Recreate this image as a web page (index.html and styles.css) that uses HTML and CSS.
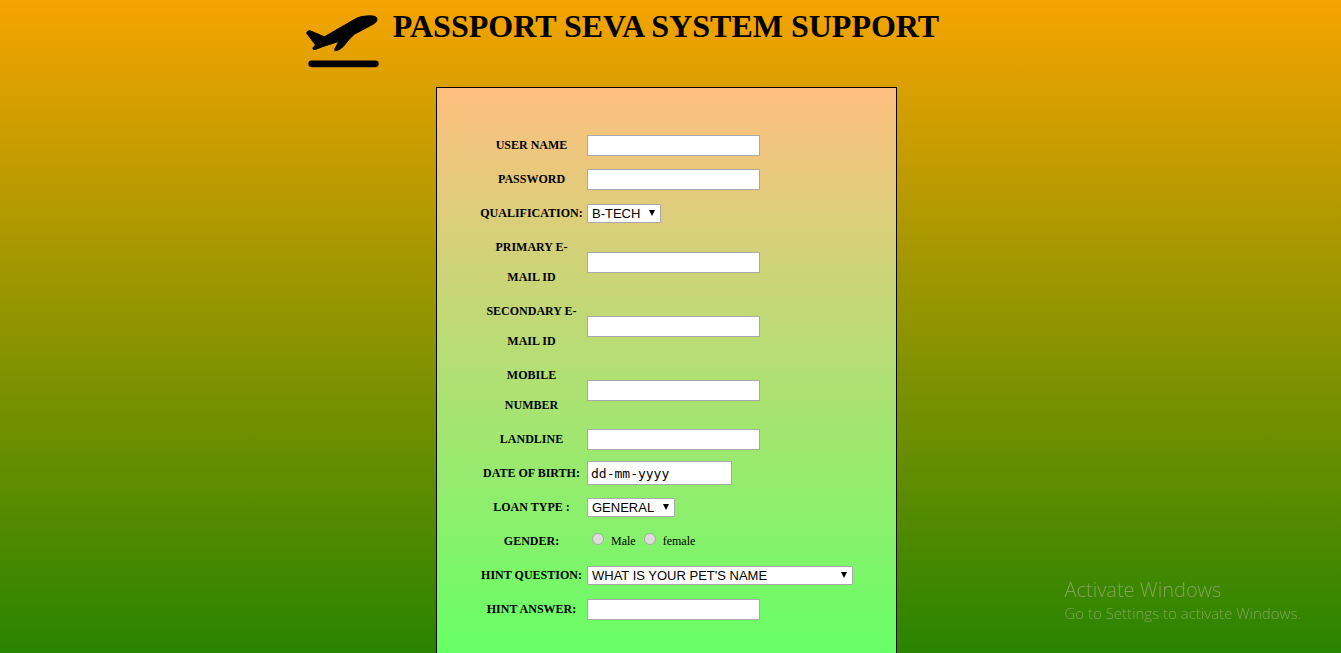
FILE: index.html
```html
<!DOCTYPE html>
<html lang="en">
<head>
<meta charset="utf-8">
<title>Passport Seva System Support</title>
<link rel="stylesheet" href="styles.css">
</head>
<body>
<header class="banner">
  <svg class="logo" viewBox="47 44 219 158" aria-hidden="true">
    <path stroke="#000" stroke-width="3" stroke-linejoin="round" d="M49 98C50 92 56 89 62 92L102 109L199 53C216 46 236 45 250 47C259 48 261 54 259 61C256 68 249 71 241 75L192 101C182 110 171 122 164 132C157 141 149 147 139 150C133 152 131 149 134 145L145 123L104 136L74 147C68 148 66 144 69 140L76 134Z"/>
    <rect x="54" y="180" width="211" height="20" rx="10"/>
  </svg>
  <h1 class="title">PASSPORT SEVA SYSTEM SUPPORT</h1>
</header>
<main class="content">
  <form class="panel">
    <label class="label" for="user">USER NAME</label>
    <div class="cell"><input class="field" id="user" type="text"></div>
    <label class="label" for="pass">PASSWORD</label>
    <div class="cell"><input class="field" id="pass" type="password"></div>
    <label class="label" for="qual">QUALIFICATION:</label>
    <div class="cell"><span class="picker"><select class="select" id="qual"><option>B-TECH</option></select></span></div>
    <label class="label" for="mail1">PRIMARY E-MAIL ID</label>
    <div class="cell"><input class="field" id="mail1" type="text"></div>
    <label class="label" for="mail2">SECONDARY E-MAIL ID</label>
    <div class="cell"><input class="field" id="mail2" type="text"></div>
    <label class="label" for="mobile">MOBILE<br>NUMBER</label>
    <div class="cell"><input class="field" id="mobile" type="text"></div>
    <label class="label" for="land">LANDLINE</label>
    <div class="cell"><input class="field" id="land" type="text"></div>
    <label class="label" for="dob">DATE OF BIRTH:</label>
    <div class="cell"><input class="field date" id="dob" type="text" placeholder="dd-mm-yyyy"></div>
    <label class="label" for="loan">LOAN TYPE :</label>
    <div class="cell"><span class="picker"><select class="select" id="loan"><option>GENERAL</option></select></span></div>
    <span class="label" id="gender">GENDER:</span>
    <div class="cell choices" role="radiogroup" aria-labelledby="gender">
      <input class="radio" type="radio" name="gender" id="male"><label for="male">Male</label>
      <input class="radio" type="radio" name="gender" id="female"><label for="female">female</label>
    </div>
    <label class="label" for="hint">HINT QUESTION:</label>
    <div class="cell"><span class="picker wide"><select class="select" id="hint"><option>WHAT IS YOUR PET'S NAME</option></select></span></div>
    <label class="label" for="answer">HINT ANSWER:</label>
    <div class="cell"><input class="field" id="answer" type="text"></div>
  </form>
</main>
<aside class="notice">
  <p class="notice-title">Activate Windows</p>
  <p class="notice-text">Go to Settings to activate Windows.</p>
</aside>
</body>
</html>
```
FILE: styles.css
```css
* {
  box-sizing: border-box;
}

body {
  margin: 0;
  min-height: 100vh;
  display: flex;
  flex-direction: column;
  color: #000;
  font-family: "Liberation Serif", "Times New Roman", serif;
  background: linear-gradient(#f5a400, #298400);
}

.banner {
  display: flex;
  justify-content: center;
  gap: 14px;
  padding: 8px 96px 18px 0;
}

.logo {
  width: 73px;
  height: 53px;
  margin-top: 7px;
}

.title {
  margin: 0;
  font-size: 32px;
  line-height: 37px;
}

.content {
  flex: 1;
  display: flex;
  justify-content: center;
  padding: 1px 8px 0 0;
}

.panel {
  width: 461px;
  max-width: 100%;
  display: grid;
  grid-template-columns: 103px 1fr;
  gap: 4px;
  align-content: start;
  padding: 42px 43px 28px;
  border: 1px solid #000;
  border-bottom: 0;
  background: linear-gradient(#ffbf80, #66ff66);
  font-size: 12px;
  line-height: 30px;
}

.label {
  font-weight: bold;
  text-align: center;
}

.cell {
  display: flex;
  align-items: center;
}

.field {
  width: 173px;
  height: 21px;
  margin: 0;
  padding: 1px 3px;
  border: 1px solid #a9a9a9;
  border-radius: 0;
  background: #fff;
  font: 13px "Liberation Sans", Arial, sans-serif;
}

.date {
  width: 145px;
  height: 24px;
  font-family: "DejaVu Sans Mono", monospace;
}

.date::placeholder {
  color: #000;
  opacity: 1;
}

.picker {
  display: flex;
  position: relative;
}

.picker::after {
  content: "";
  position: absolute;
  right: 6px;
  top: 6px;
  border: 3px solid transparent;
  border-top: 6px solid #000;
  border-bottom: 0;
  pointer-events: none;
}

.wide {
  width: 266px;
}

.select {
  appearance: none;
  width: 100%;
  height: 19px;
  margin: 0;
  padding: 0 19px 0 4px;
  border: 1px solid #a9a9a9;
  border-radius: 1px;
  background: #fff;
  color: #000;
  font: 13px "Liberation Sans", Arial, sans-serif;
}

.radio {
  appearance: none;
  width: 12px;
  height: 12px;
  margin: 0 7px 4px 5px;
  border: 1px solid #a9a9a9;
  border-radius: 50%;
  background: #ddd;
}

.radio:checked {
  background: radial-gradient(#444 3px, #ddd 4px);
}

.choices label + .radio {
  margin-left: 8px;
}

.notice {
  position: fixed;
  right: 40px;
  bottom: 30px;
  color: #81a35d;
  font-family: "Segoe UI", "Open Sans", sans-serif;
  font-weight: 300;
}

.notice-title,
.notice-text {
  margin: 0;
}

.notice-title {
  font-size: 20px;
  line-height: 26px;
}

.notice-text {
  font-size: 15px;
  line-height: 20px;
}
```
